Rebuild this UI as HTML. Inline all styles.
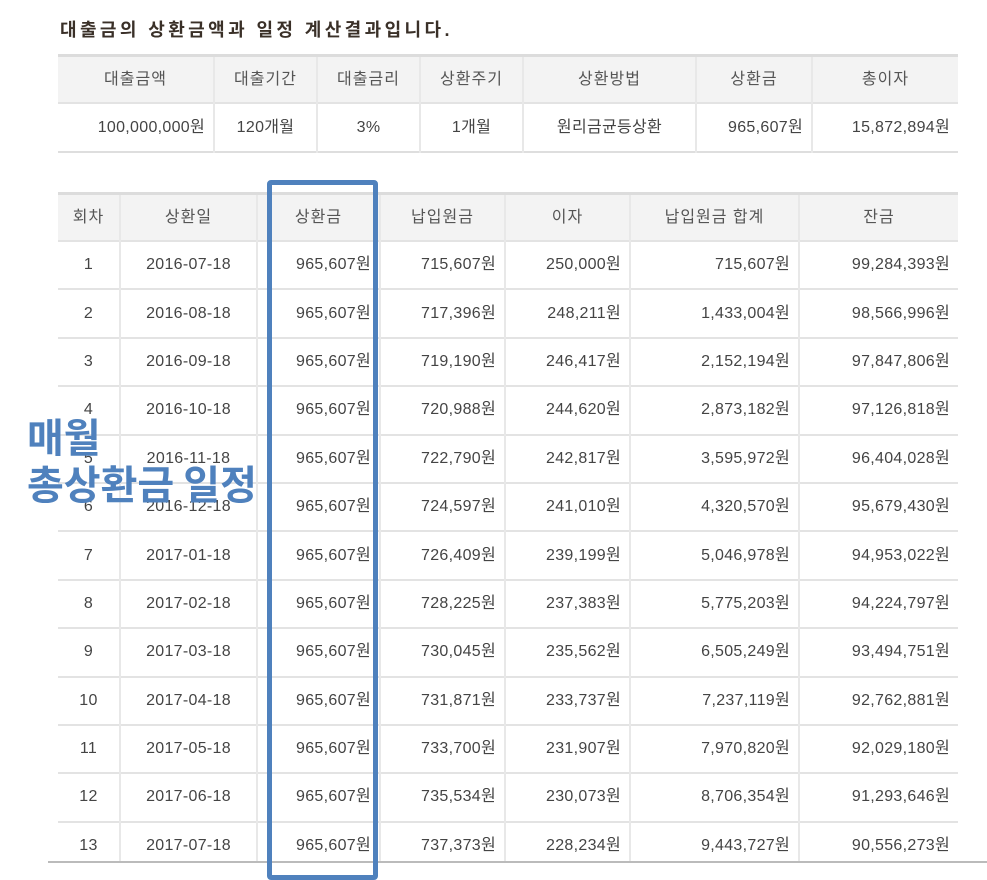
<!DOCTYPE html>
<html><head><meta charset="utf-8"><style>
body{margin:0;width:987px;height:880px;background:#fff;position:relative;overflow:hidden;font-family:"Liberation Sans","Noto Sans CJK KR","NanumGothic",sans-serif;color:#444;}
.title{position:absolute;left:60px;top:18px;font-size:18px;font-weight:bold;color:#3a3028;letter-spacing:3.4px;line-height:24px}
table{position:absolute;border-collapse:collapse;table-layout:fixed;font-size:16px}
td,th{line-height:20px;vertical-align:middle;padding:0 8px;white-space:nowrap}
td{border-top:2px solid #e3e3e3;border-left:2px solid #e8e8e8;letter-spacing:0.3px}
td:first-child{border-left:none}
th{background:#f3f3f3;font-weight:normal;border-left:2px solid #e8e8e8;border-top:3px solid #dcdcdc;color:#555;letter-spacing:1px}
th:first-child{border-left:none}
.r{text-align:right}.c{text-align:center}
#s{left:58px;top:54px;width:900px;border-bottom:2px solid #dedede}
#s th{height:45px}#s td{height:47px}
#m{left:58px;top:192px;width:900px}
#m th{height:45px}#m td{height:46.4px}
.box{position:absolute;left:267px;top:180px;width:101px;height:690px;border:5px solid #4f81bd;border-radius:4px}
.bl{position:absolute;left:48px;top:861px;width:939px;height:2px;background:#bbb}
.wh{position:absolute;left:0;top:863px;width:987px;height:17px;background:#fff}
.ov{position:absolute;left:27px;color:#4f81bd;font-weight:bold;font-size:40px;font-family:"Noto Sans CJK KR",sans-serif;line-height:1;letter-spacing:0px}
</style></head><body>
<div class="title">대출금의 상환금액과 일정 계산결과입니다.</div>
<table id="s"><colgroup><col style="width:156px"><col style="width:103px"><col style="width:103px"><col style="width:103px"><col style="width:173px"><col style="width:116px"><col style="width:146px"></colgroup>
<tr><th>대출금액</th><th>대출기간</th><th>대출금리</th><th>상환주기</th><th>상환방법</th><th>상환금</th><th>총이자</th></tr>
<tr><td class="r">100,000,000원</td><td class="c">120개월</td><td class="c">3%</td><td class="c">1개월</td><td class="c">원리금균등상환</td><td class="r">965,607원</td><td class="r">15,872,894원</td></tr>
</table>
<table id="m"><colgroup><col style="width:62px"><col style="width:137px"><col style="width:123px"><col style="width:125px"><col style="width:125px"><col style="width:169px"><col style="width:159px"></colgroup>
<tr><th>회차</th><th>상환일</th><th>상환금</th><th>납입원금</th><th>이자</th><th>납입원금 합계</th><th>잔금</th></tr>
<tr><td class="c">1</td><td class="c">2016-07-18</td><td class="r">965,607원</td><td class="r">715,607원</td><td class="r">250,000원</td><td class="r">715,607원</td><td class="r">99,284,393원</td></tr>
<tr><td class="c">2</td><td class="c">2016-08-18</td><td class="r">965,607원</td><td class="r">717,396원</td><td class="r">248,211원</td><td class="r">1,433,004원</td><td class="r">98,566,996원</td></tr>
<tr><td class="c">3</td><td class="c">2016-09-18</td><td class="r">965,607원</td><td class="r">719,190원</td><td class="r">246,417원</td><td class="r">2,152,194원</td><td class="r">97,847,806원</td></tr>
<tr><td class="c">4</td><td class="c">2016-10-18</td><td class="r">965,607원</td><td class="r">720,988원</td><td class="r">244,620원</td><td class="r">2,873,182원</td><td class="r">97,126,818원</td></tr>
<tr><td class="c">5</td><td class="c">2016-11-18</td><td class="r">965,607원</td><td class="r">722,790원</td><td class="r">242,817원</td><td class="r">3,595,972원</td><td class="r">96,404,028원</td></tr>
<tr><td class="c">6</td><td class="c">2016-12-18</td><td class="r">965,607원</td><td class="r">724,597원</td><td class="r">241,010원</td><td class="r">4,320,570원</td><td class="r">95,679,430원</td></tr>
<tr><td class="c">7</td><td class="c">2017-01-18</td><td class="r">965,607원</td><td class="r">726,409원</td><td class="r">239,199원</td><td class="r">5,046,978원</td><td class="r">94,953,022원</td></tr>
<tr><td class="c">8</td><td class="c">2017-02-18</td><td class="r">965,607원</td><td class="r">728,225원</td><td class="r">237,383원</td><td class="r">5,775,203원</td><td class="r">94,224,797원</td></tr>
<tr><td class="c">9</td><td class="c">2017-03-18</td><td class="r">965,607원</td><td class="r">730,045원</td><td class="r">235,562원</td><td class="r">6,505,249원</td><td class="r">93,494,751원</td></tr>
<tr><td class="c">10</td><td class="c">2017-04-18</td><td class="r">965,607원</td><td class="r">731,871원</td><td class="r">233,737원</td><td class="r">7,237,119원</td><td class="r">92,762,881원</td></tr>
<tr><td class="c">11</td><td class="c">2017-05-18</td><td class="r">965,607원</td><td class="r">733,700원</td><td class="r">231,907원</td><td class="r">7,970,820원</td><td class="r">92,029,180원</td></tr>
<tr><td class="c">12</td><td class="c">2017-06-18</td><td class="r">965,607원</td><td class="r">735,534원</td><td class="r">230,073원</td><td class="r">8,706,354원</td><td class="r">91,293,646원</td></tr>
<tr><td class="c">13</td><td class="c">2017-07-18</td><td class="r">965,607원</td><td class="r">737,373원</td><td class="r">228,234원</td><td class="r">9,443,727원</td><td class="r">90,556,273원</td></tr>
</table>
<div class="wh"></div>
<div class="bl"></div>
<div class="box"></div>
<div class="ov" style="top:415px">매월</div>
<div class="ov" style="top:462px">총상환금 일정</div>
</body></html>
